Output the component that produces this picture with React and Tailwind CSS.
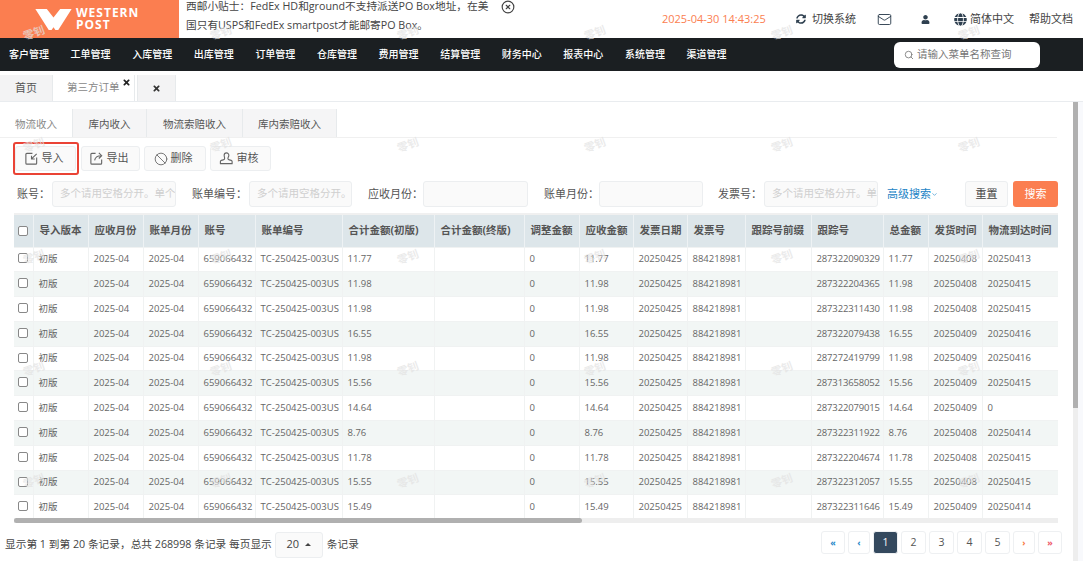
import { Ban, ChevronDown, Mail, Search, CircleX } from 'lucide-react'
import { FaGlobe, FaSyncAlt, FaTimes, FaUser } from 'react-icons/fa'

const menus = ['客户管理', '工单管理', '入库管理', '出库管理', '订单管理', '仓库管理', '费用管理', '结算管理', '财务中心', '报表中心', '系统管理', '渠道管理']

const columns = [
  { label: '导入版本', w: 'w-[55px]' },
  { label: '应收月份', w: 'w-[55px]' },
  { label: '账单月份', w: 'w-[55px]' },
  { label: '账号', w: 'w-[57px]' },
  { label: '账单编号', w: 'w-[87px]' },
  { label: '合计金额(初版)', w: 'w-[92px]' },
  { label: '合计金额(终版)', w: 'w-[90px]' },
  { label: '调整金额', w: 'w-[55px]' },
  { label: '应收金额', w: 'w-[54px]' },
  { label: '发票日期', w: 'w-[54px]' },
  { label: '发票号', w: 'w-[58px]' },
  { label: '跟踪号前缀', w: 'w-[66px]' },
  { label: '跟踪号', w: 'w-[72px]' },
  { label: '总金额', w: 'w-[45px]' },
  { label: '发货时间', w: 'w-[54px]' },
  { label: '物流到达时间', w: 'w-[76px]' },
]

const rows = [
  ['11.77', '287322090329', '20250408', '20250413'],
  ['11.98', '287322204365', '20250408', '20250415'],
  ['11.98', '287322311430', '20250408', '20250415'],
  ['16.55', '287322079438', '20250409', '20250416'],
  ['11.98', '287272419799', '20250409', '20250416'],
  ['15.56', '287313658052', '20250409', '20250415'],
  ['14.64', '287322079015', '20250409', '0'],
  ['8.76', '287322311922', '20250408', '20250414'],
  ['11.78', '287322204674', '20250408', '20250415'],
  ['15.55', '287322312057', '20250408', '20250415'],
  ['15.49', '287322311646', '20250409', '20250414'],
]

const pages = [
  { t: '«', w: 'w-[24px]', c: 'text-[#1c84c6] text-[9px] font-bold' },
  { t: '‹', w: 'w-[22px]', c: 'text-[#1c84c6] text-[9px] font-bold' },
  { t: '1', w: 'w-[25px]', c: 'bg-[#34495e] text-white text-[10.500px]' },
  { t: '2', w: 'w-[25px]', c: 'text-[#555] text-[10.500px]' },
  { t: '3', w: 'w-[25px]', c: 'text-[#555] text-[10.500px]' },
  { t: '4', w: 'w-[25px]', c: 'text-[#555] text-[10.500px]' },
  { t: '5', w: 'w-[25px]', c: 'text-[#555] text-[10.500px]' },
  { t: '›', w: 'w-[22px]', c: 'text-[#f8753f] text-[9px] font-bold' },
  { t: '»', w: 'w-[24px]', c: 'text-[#ed5565] text-[9px] font-bold' },
]

function ImportIcon() {
  return (
    <svg viewBox="0 0 16 16" className="w-[15px] h-[15px]" fill="none" stroke="#666" strokeWidth="1.2">
      <path d="M9 2.500H3a1 1 0 0 0-1 1v9.500a1 1 0 0 0 1 1h9.500a1 1 0 0 0 1-1V7" />
      <path d="M13.500 3 8 8.500M8 5v3.500h3.500" />
    </svg>
  )
}

function ExportIcon() {
  return (
    <svg viewBox="0 0 16 16" className="w-[15px] h-[15px]" fill="none" stroke="#666" strokeWidth="1.2">
      <path d="M7 2.500H3a1 1 0 0 0-1 1v9.500a1 1 0 0 0 1 1h9.500a1 1 0 0 0 1-1V9" />
      <path d="M6 10c.5-3 2.500-5 7-5M10.500 2l3 3-3 3" />
    </svg>
  )
}

function AuditIcon() {
  return (
    <svg viewBox="0 0 16 16" className="w-[15px] h-[15px]" fill="none" stroke="#666" strokeWidth="1.2" strokeLinejoin="round">
      <path d="M5.500 4.500a2.500 2.500 0 0 1 5 0c0 1.500-1 2.200-1 3.500 0 .8.500 1.300 1.500 1.500l2 .5c.6.200 1 .6 1 1.200V13.500H1.500V11.200c0-.6.400-1 1-1.200l2-.5c1-.2 1.500-.7 1.500-1.500 0-1.300-.5-2-.5-3.500z" />
    </svg>
  )
}

function ToolButton({ icon, label, className }) {
  return (
    <button className={`h-[25px] flex items-center justify-center gap-[2px] pr-[4px] bg-[#fafafa] border border-[#eceef0] rounded-[3px] text-[11px] text-[#555] ${className}`}>
      {icon}
      <span className="ml-[1px]">{label}</span>
    </button>
  )
}

function Field({ label, placeholder, labelClass, inputClass }) {
  return (
    <>
      <span className={`text-[11px] text-[#555] shrink-0 ${labelClass}`}>{label}</span>
      <div className={`h-[26px] shrink-0 bg-[#fafafa] border border-[#eceef0] rounded-[3px] text-[10.500px] text-[#cfcfcf] pl-[7px] flex items-center overflow-hidden whitespace-nowrap ${inputClass}`}>
        {placeholder}
      </div>
    </>
  )
}

export default function App() {
  return (
    <div className="relative w-[1083px] h-[561px] overflow-hidden bg-white flex flex-col font-['Open_Sans','Noto_Sans_CJK_SC',sans-serif] text-[#555]">
      {/* Top header */}
      <div className="h-[38px] shrink-0 flex items-center">
        <div className="w-[179px] h-full bg-[#fb7e50] flex items-center pl-[35px] gap-[4px]">
          <svg viewBox="0 0 38 22" className="w-[37px] h-[21px]" fill="white">
            <path d="M0 0h12l7 9 7-9h12L24 22h-3l-2-3-2 3h-3z" />
          </svg>
          <div className="text-white font-bold text-[12px] leading-[12px] tracking-[1px] mb-[1px]">
            <div>WESTERN</div>
            <div>POST</div>
          </div>
        </div>
        <div className="w-[310px] ml-[7px] mb-[6px] text-[10.700px] leading-[19px] text-[#444] whitespace-nowrap">
          <div>西邮小贴士：FedEx HD和ground不支持派送PO Box地址，在美</div>
          <div>国只有USPS和FedEx smartpost才能邮寄PO Box。</div>
        </div>
        <CircleX className="w-[14px] h-[14px] ml-[5px] mb-[25px] text-[#444]" strokeWidth={2} />
        <span className="ml-[147px] w-[104px] text-[11px] text-[#fb7e50] whitespace-nowrap">2025-04-30 14:43:25</span>
        <FaSyncAlt className="ml-[30px] w-[10px] h-[10px] text-[#2f4050]" />
        <span className="ml-[6px] text-[11px] text-[#444] whitespace-nowrap">切换系统</span>
        <Mail className="ml-[21px] w-[15px] h-[15px] text-[#2f4050]" strokeWidth={1.5} />
        <FaUser className="ml-[29px] w-[9px] h-[9px] text-[#2f4050]" />
        <FaGlobe className="ml-[24px] w-[13px] h-[13px] text-[#2f4050]" />
        <span className="ml-[3px] text-[11px] text-[#444] whitespace-nowrap">简体中文</span>
        <span className="ml-[15px] text-[11px] text-[#444] whitespace-nowrap">帮助文档</span>
      </div>

      {/* Main menu */}
      <div className="h-[33px] shrink-0 bg-[#1b1f22] flex items-center pl-[9px]">
        {menus.map((m) => (
          <span key={m} className="w-[61.600px] shrink-0 text-[10px] font-medium text-white whitespace-nowrap">{m}</span>
        ))}
        <div className="ml-auto mr-[43px] w-[146px] h-[26px] bg-white rounded-[6px] flex items-center pl-[10px] gap-[3px] text-[10.500px] text-[#777]">
          <Search className="w-[10px] h-[10px]" />
          请输入菜单名称查询
        </div>
      </div>

      {/* Page tabs */}
      <div className="h-[31px] shrink-0 flex items-end border-b border-[#e9ecef] pt-[4px]">
        <div className="w-[52px] h-full bg-[#f3f3f4] flex items-center justify-center text-[11px]">首页</div>
        <div className="w-[83px] h-full bg-white border-l border-r border-[#e7eaec] flex items-center pl-[14px] text-[10.500px] text-[#888] relative">
          第三方订单
          <FaTimes className="absolute z-10 right-[3px] top-[3px] w-[9px] h-[9px] text-[#222]" />
        </div>
        <div className="ml-[2px] w-[39px] h-full bg-[#f3f3f4] border-l border-r border-[#e7eaec] flex items-center justify-center">
          <FaTimes className="w-[9px] h-[9px] text-[#333]" />
        </div>
      </div>

      {/* Sub tabs */}
      <div className="h-[29px] mt-[7px] mr-[26px] shrink-0 flex border-b border-[#f0f0f0] text-[10.500px]">
        <div className="w-[72px] pt-[3px] flex items-center justify-center text-[#888]">物流收入</div>
        <div className="w-[74px] pt-[3px] bg-[#f5f5f6] border-l border-[#e7eaec] flex items-center justify-center">库内收入</div>
        <div className="w-[96px] pt-[3px] bg-[#f5f5f6] border-l border-[#e7eaec] flex items-center justify-center">物流索赔收入</div>
        <div className="w-[95px] pt-[3px] bg-[#f5f5f6] border-l border-r border-[#e7eaec] flex items-center justify-center">库内索赔收入</div>
      </div>

      {/* Toolbar */}
      <div className="mt-[8px] ml-[15px] flex gap-[4px] shrink-0">
        <div className="relative">
          <ToolButton icon={<ImportIcon />} label="导入" className="w-[61px]" />
          <div className="absolute -left-[2px] -right-[3px] -top-[4px] -bottom-[4px] border-[2px] border-[#ea4335] rounded-[3px]" />
        </div>
        <ToolButton icon={<ExportIcon />} label="导出" className="w-[59px] ml-[1px]" />
        <ToolButton icon={<Ban className="w-[14px] h-[14px] text-[#666]" strokeWidth={1.5} />} label="删除" className="w-[62px]" />
        <ToolButton icon={<AuditIcon />} label="审核" className="w-[61px]" />
      </div>

      {/* Search row */}
      <div className="mt-[10px] pl-[17px] flex items-center shrink-0">
        <Field label="账号：" placeholder="多个请用空格分开。单个" labelClass="w-[35px]" inputClass="w-[124px]" />
        <Field label="账单编号：" placeholder="多个请用空格分开。" labelClass="ml-[16px] w-[57px]" inputClass="w-[103px]" />
        <Field label="应收月份：" labelClass="ml-[16px] w-[55px]" inputClass="w-[105px]" />
        <Field label="账单月份：" labelClass="ml-[16px] w-[55px]" inputClass="w-[104px]" />
        <Field label="发票号：" placeholder="多个请用空格分开。单" labelClass="ml-[15px] w-[46px]" inputClass="w-[114px]" />
        <span className="ml-[9px] w-[50px] flex items-center text-[11px] text-[#1c84c6] whitespace-nowrap">
          高级搜索<ChevronDown className="w-[7px] h-[7px] shrink-0" />
        </span>
        <button className="ml-[28px] w-[43px] h-[26px] bg-[#fafafa] border border-[#eceef0] rounded-[3px] text-[11px] text-[#444]">重置</button>
        <button className="ml-[5px] w-[45px] h-[26px] bg-[#fb7e50] rounded-[3px] text-[11px] text-white">搜索</button>
      </div>

      {/* Data table */}
      <div className="mt-[6px] ml-[14px] w-[1044px] h-[310px] shrink-0 border-t-[2px] border-[#f0f0f0] overflow-hidden relative">
        <table className="table-fixed border-collapse w-[1044px] text-[9.500px] text-[#666]">
          <colgroup>
            <col className="w-[19px]" />
            {columns.map((c) => (
              <col key={c.label} className={c.w} />
            ))}
          </colgroup>
          <thead>
            <tr className="h-[32px] bg-[#dde6ea] text-[10.500px] font-semibold text-[#555]">
              <th className="border-r border-[#eef2f4]">
                <input type="checkbox" className="block mx-auto w-[10px] h-[10px] appearance-none bg-white border border-[#888] rounded-[2px]" />
              </th>
              {columns.map((c) => (
                <th key={c.label} className="text-left pl-[6px] border-r border-[#eef2f4] whitespace-nowrap overflow-hidden">{c.label}</th>
              ))}
            </tr>
          </thead>
          <tbody>
            {rows.map((r, i) => (
              <tr key={r[1]} className={`h-[24.800px] ${i % 2 ? 'bg-[#f2f6f5]' : 'bg-white'}`}>
                <td className="border border-[#f0f2f2] border-l-0">
                  <input type="checkbox" className="block mx-auto -translate-y-[1px] w-[10px] h-[10px] appearance-none bg-white border border-[#888] rounded-[2px]" />
                </td>
                <td className="pl-[5px] border border-[#f0f2f2]">初版</td>
                <td className="pl-[5px] border border-[#f0f2f2]">2025-04</td>
                <td className="pl-[5px] border border-[#f0f2f2]">2025-04</td>
                <td className="pl-[5px] border border-[#f0f2f2]">659066432</td>
                <td className="pl-[5px] border border-[#f0f2f2] whitespace-nowrap">TC-250425-003US</td>
                <td className="pl-[5px] border border-[#f0f2f2]">{r[0]}</td>
                <td className="border border-[#f0f2f2]"></td>
                <td className="pl-[5px] border border-[#f0f2f2]">0</td>
                <td className="pl-[5px] border border-[#f0f2f2]">{r[0]}</td>
                <td className="pl-[5px] border border-[#f0f2f2]">20250425</td>
                <td className="pl-[5px] border border-[#f0f2f2]">884218981</td>
                <td className="border border-[#f0f2f2]"></td>
                <td className="pl-[5px] border border-[#f0f2f2] whitespace-nowrap tracking-[-0.150px]">{r[1]}</td>
                <td className="pl-[5px] border border-[#f0f2f2]">{r[0]}</td>
                <td className="pl-[5px] border border-[#f0f2f2]">{r[2]}</td>
                <td className="pl-[5px] border border-[#f0f2f2]">{r[3]}</td>
              </tr>
            ))}
          </tbody>
        </table>
        {/* table scrollbar */}
        <div className="absolute left-0 right-0 bottom-0 h-[5px] bg-[#eeeeee]">
          <div className="w-[568px] h-full bg-[#b0b0b0] rounded-[3px]" />
        </div>
      </div>

      {/* Pagination */}
      <div className="mt-[8px] flex items-center shrink-0 pl-[5px] pr-[21px] text-[10.700px] text-[#444] whitespace-nowrap">
        <span>显示第 1 到第 20 条记录，总共 268998 条记录 每页显示</span>
        <div className="ml-[3px] w-[48px] h-[26px] bg-[#fafafa] border border-[#eceef0] rounded-[3px] flex items-center justify-center gap-[6px] text-[11px]">
          20
          <span className="w-0 h-0 border-x-[3px] border-x-transparent border-b-[3px] border-b-[#444]" />
        </div>
        <span className="ml-[4px]">条记录</span>
        <div className="ml-auto flex gap-[3px] mb-[4px]">
          {pages.map((p) => (
            <div key={p.t} className={`h-[23px] flex items-center justify-center rounded-[3px] border border-[#eef0f2] ${p.w} ${p.c}`}>{p.t}</div>
          ))}
        </div>
      </div>

      {/* Page scrollbar */}
      <div className="absolute right-0 top-[102px] bottom-0 w-[10px] bg-[#f8f9fc]">
        <div className="w-[5px] h-full bg-[#eeeeee]">
          <div className="h-[306px] bg-[#b0b0b0]" />
        </div>
      </div>

      {/* Watermark */}
      <div className="absolute inset-0 pointer-events-none grid grid-cols-[repeat(6,187px)] grid-rows-[repeat(5,112px)] -translate-x-[60px] -translate-y-[23px]">
        {Array.from({ length: 30 }, (_, i) => (
          <div key={i} className="flex items-center justify-center">
            <span className="-rotate-[20deg] text-[11px] font-bold text-[#e2e2e2]/70">零钊</span>
          </div>
        ))}
      </div>
    </div>
  )
}
